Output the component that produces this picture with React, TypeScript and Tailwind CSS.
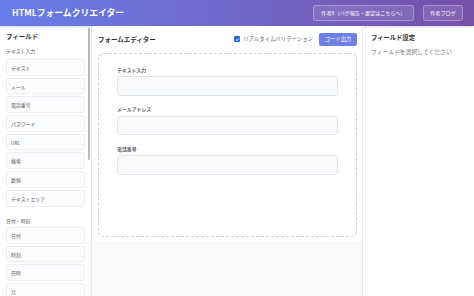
const textFields = ["テキスト", "メール", "電話番号", "パスワード", "URL", "検索", "数値", "テキストエリア"];
const dateFields = ["日付", "時刻", "日時", "月"];

const formFields = [
  { label: "テキスト入力" },
  { label: "メールアドレス" },
  { label: "電話番号" },
];

function FieldItem({ name }: { name: string }) {
  return (
    <div className="h-[16.7px] shrink-0 flex items-center px-[4px] rounded-[3px] border border-[#eceef2] bg-[#fbfcfd] text-[4.9px] leading-[7px] text-[#5a5a5a]">
      {name}
    </div>
  );
}

export default function App() {
  return (
    <div
      className="w-[474px] h-[296px] flex flex-col overflow-hidden bg-white text-[#333]"
      style={{ fontFamily: '"Noto Sans CJK JP", "Noto Sans", sans-serif' }}
    >
      {/* header */}
      <header className="h-[26px] shrink-0 flex items-center justify-between pl-[12px] pr-[11px] bg-gradient-to-r from-[#667eea] to-[#7650a9] shadow-[0_1px_2px_rgba(0,0,0,0.15)]">
        <h1 className="text-[8.8px] leading-[10px] font-bold text-white">HTMLフォームクリエイター</h1>
        <div className="flex items-center gap-[9px]">
          <button className="h-[16px] w-[101px] flex items-center justify-center rounded-[3px] border border-white/30 bg-white/10 text-[5.1px] text-white">
            作者X（バグ報告・要望はこちらへ）
          </button>
          <button className="h-[16px] w-[40px] flex items-center justify-center rounded-[3px] border border-white/30 bg-white/10 text-[5.1px] text-white">
            作者ブログ
          </button>
        </div>
      </header>

      <div className="flex flex-1 min-h-0">
        {/* sidebar */}
        <aside className="w-[92px] shrink-0 flex border-r border-[#e5e7eb]">
          <div className="w-[89px] pl-[6px] pr-[3px] pt-[6px] overflow-hidden">
            <h2 className="text-[6.5px] leading-[9px] font-bold text-[#333]">フィールド</h2>
            <h3 className="mt-[6px] text-[4.9px] leading-[7px] text-[#555]">テキスト入力</h3>
            <div className="mt-[5px] flex flex-col gap-[2px]">
              {textFields.map((f) => (
                <FieldItem key={f} name={f} />
              ))}
            </div>
            <h3 className="mt-[10.5px] text-[4.9px] leading-[7px] text-[#555]">日付・時刻</h3>
            <div className="mt-[3px] flex flex-col gap-[2px]">
              {dateFields.map((f) => (
                <FieldItem key={f} name={f} />
              ))}
            </div>
          </div>
          <div className="w-[3px] pt-[2px]">
            <div className="w-[2px] h-[132px] rounded-full bg-[#b9b9b9]" />
          </div>
        </aside>

        {/* editor */}
        <main className="w-[270px] shrink-0 flex flex-col">
          <div className="bg-white pl-[6px] pr-[5px] pt-[6px] pb-[4px]">
            <div className="h-[15px] flex items-center justify-between">
              <h2 className="text-[6.5px] leading-[9px] font-bold text-[#333]">フォームエディター</h2>
              <div className="flex items-center">
                <label className="flex items-center gap-[3px] text-[5.4px] text-[#666]">
                  <span className="w-[6px] h-[6px] rounded-[1px] bg-[#2f6ad9] flex items-center justify-center">
                    <svg viewBox="0 0 10 10" className="w-[5px] h-[5px]">
                      <path d="M2 5.2 L4.2 7.3 L8 2.8" fill="none" stroke="white" strokeWidth="1.6" />
                    </svg>
                  </span>
                  リアルタイムバリデーション
                </label>
                <button className="ml-[6px] h-[13px] w-[38px] flex items-center justify-center rounded-[2px] bg-[#6f80e4] text-[5.3px] text-white">
                  コード出力
                </button>
              </div>
            </div>
            <div className="mt-[6px] h-[184px] rounded-[6px] border border-dashed border-[#cdd1d7] px-[18px] pt-[11.5px] flex flex-col gap-[9.5px]">
              {formFields.map((f) => (
                <div key={f.label} className="flex flex-col">
                  <label className="text-[4.9px] leading-[7px] font-medium text-[#444]">{f.label}</label>
                  <div className="mt-[3.5px] h-[19.5px] rounded-[3px] border border-[#e1e4e9] bg-[#f8f9fb]" />
                </div>
              ))}
            </div>
          </div>
          <div className="flex-1 bg-[#f8f9fb]" />
        </main>

        {/* settings */}
        <aside className="flex-1 border-l border-[#e5e7eb] pl-[8px] pt-[6.5px]">
          <h2 className="text-[6.3px] leading-[9px] font-bold text-[#333]">フィールド設定</h2>
          <p className="mt-[6px] text-[5.8px] leading-[7px] text-[#777]">フィールドを選択してください</p>
        </aside>
      </div>
    </div>
  );
}
